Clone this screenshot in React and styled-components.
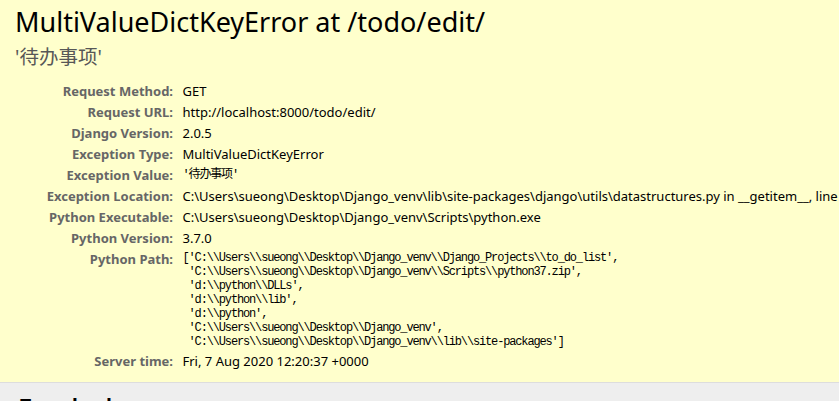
import React from 'react';
import styled, { createGlobalStyle } from 'styled-components';

const Global = createGlobalStyle`
  html, body {
    margin: 0;
    padding: 0;
  }
  body {
    font-family: "Noto Sans", "Noto Sans CJK SC", sans-serif;
    font-size: 13px;
    background: #fff;
    color: #000;
    overflow: hidden;
  }
`;

const Summary = styled.div`
  background: #ffc;
  padding: 5px 20px 10px 15px;
  border-bottom: 1px solid #ddd;
`;

const Title = styled.h1`
  margin: 0 0 5px;
  font-weight: normal;
  font-size: 27px;
  line-height: 34px;
  white-space: nowrap;
`;

const ExceptionValue = styled.pre`
  margin: 0 0 11px;
  font-family: "Noto Sans", "Noto Sans CJK SC", sans-serif;
  font-size: 19.5px;
  line-height: 26px;
  color: #575757;
`;

const Meta = styled.table`
  border: none;
  border-collapse: collapse;
`;

const Label = styled.th`
  padding: 2px 6.5px 2px 3px;
  vertical-align: top;
  color: #666;
  font-weight: bold;
  line-height: 17px;
  white-space: nowrap;
`;

const LabelText = styled.div`
  width: 155px;
  text-align: right;
`;

const Value = styled.td`
  padding: 2px 3px;
  vertical-align: top;
  line-height: 17px;
  white-space: nowrap;
`;

const Mono = styled.pre`
  margin: 0;
  font-family: "Liberation Mono", "Noto Sans CJK SC", monospace;
  font-size: 12px;
  letter-spacing: -1.15px;
  line-height: ${(p) => (p.$tall ? '17px' : '14px')};
`;

const Traceback = styled.div`
  background: #eee;
  padding: 10px 20px;
  min-height: 200px;
`;

const SectionTitle = styled.h2`
  margin: 0;
  font-size: 19.5px;
  line-height: 26px;
  font-weight: bold;
`;

const pythonPath = [
  "['C:\\\\Users\\\\sueong\\\\Desktop\\\\Django_venv\\\\Django_Projects\\\\to_do_list',",
  " 'C:\\\\Users\\\\sueong\\\\Desktop\\\\Django_venv\\\\Scripts\\\\python37.zip',",
  " 'd:\\\\python\\\\DLLs',",
  " 'd:\\\\python\\\\lib',",
  " 'd:\\\\python',",
  " 'C:\\\\Users\\\\sueong\\\\Desktop\\\\Django_venv',",
  " 'C:\\\\Users\\\\sueong\\\\Desktop\\\\Django_venv\\\\lib\\\\site-packages']",
].join('\n');

const rows = [
  ['Request Method:', 'GET'],
  ['Request URL:', 'http://localhost:8000/todo/edit/'],
  ['Django Version:', '2.0.5'],
  ['Exception Type:', 'MultiValueDictKeyError'],
];

const rows2 = [
  [
    'Exception Location:',
    'C:\\Users\\sueong\\Desktop\\Django_venv\\lib\\site-packages\\django\\utils\\datastructures.py in __getitem__, line 79',
  ],
  ['Python Executable:', 'C:\\Users\\sueong\\Desktop\\Django_venv\\Scripts\\python.exe'],
  ['Python Version:', '3.7.0'],
];

const MetaLabel = ({ children }) => (
  <Label>
    <LabelText>{children}</LabelText>
  </Label>
);

const App = () => {
  return (
    <>
      <Global />
      <Summary>
        <Title>MultiValueDictKeyError at /todo/edit/</Title>
        <ExceptionValue>'待办事项'</ExceptionValue>
        <Meta>
          <tbody>
            {rows.map(([k, v]) => (
              <tr key={k}>
                <MetaLabel>{k}</MetaLabel>
                <Value>{v}</Value>
              </tr>
            ))}
            <tr>
              <MetaLabel>Exception Value:</MetaLabel>
              <Value>
                <Mono $tall>'待办事项'</Mono>
              </Value>
            </tr>
            {rows2.map(([k, v]) => (
              <tr key={k}>
                <MetaLabel>{k}</MetaLabel>
                <Value>{v}</Value>
              </tr>
            ))}
            <tr>
              <MetaLabel>Python Path:</MetaLabel>
              <Value>
                <Mono>{pythonPath}</Mono>
              </Value>
            </tr>
            <tr>
              <MetaLabel>Server time:</MetaLabel>
              <Value>Fri, 7 Aug 2020 12:20:37 +0000</Value>
            </tr>
          </tbody>
        </Meta>
      </Summary>
      <Traceback>
        <SectionTitle>Traceback</SectionTitle>
      </Traceback>
    </>
  );
};

export default App;
